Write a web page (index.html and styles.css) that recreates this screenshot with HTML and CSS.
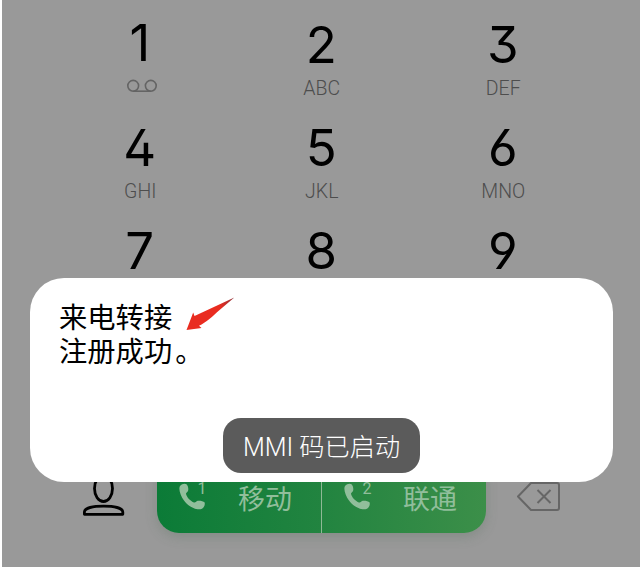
FILE: index.html
```html
<!DOCTYPE html>
<html lang="zh-CN">
<head>
<meta charset="utf-8">
<title>拨号</title>
<link rel="stylesheet" href="styles.css">
</head>
<body>
<main class="screen">
  <section class="keypad">
    <div class="key"><span class="digit digit-one">1</span>
      <svg class="voicemail" width="32" height="14" viewBox="0 0 32 14"><circle cx="7.2" cy="6.8" r="5.4"/><circle cx="24.8" cy="6.8" r="5.4"/><path d="M7.2 12.2H24.8"/></svg>
    </div>
    <div class="key"><span class="digit">2</span><span class="letters">ABC</span></div>
    <div class="key"><span class="digit">3</span><span class="letters">DEF</span></div>
    <div class="key"><span class="digit">4</span><span class="letters">GHI</span></div>
    <div class="key"><span class="digit">5</span><span class="letters">JKL</span></div>
    <div class="key"><span class="digit">6</span><span class="letters">MNO</span></div>
    <div class="key"><span class="digit">7</span></div>
    <div class="key"><span class="digit">8</span></div>
    <div class="key"><span class="digit">9</span></div>
  </section>
  <footer class="actions">
    <svg class="contact" width="44" height="48" viewBox="0 0 44 48"><ellipse cx="21.5" cy="19.5" rx="9" ry="13"/><path d="M2.4 45.3V43C2.4 39 11 37.2 21.6 37.2S40.8 39 40.8 43V45.3Z"/></svg>
    <div class="call-bar">
      <button class="call call-first">
        <svg class="phone" width="26" height="27" viewBox="0 0 26 27"><path d="M1 3C3 .5 6 .3 7.5 1.2C9 2.5 9.8 6 9 8C8.5 9.3 7 9.5 7 10.8C7.5 14 11.5 18.5 15 19.5C16.5 20 17.3 18 19 17.8C21 17.5 24.5 18.3 25.5 19.3C26.3 21 25.5 24.5 23 25.8C18 28 9 23.5 5 17.5C1.5 12.8-.8 6 1 3Z"/></svg>
        <sup class="sim">1</sup><span class="carrier">移动</span>
      </button>
      <button class="call">
        <svg class="phone" width="26" height="27" viewBox="0 0 26 27"><path d="M1 3C3 .5 6 .3 7.5 1.2C9 2.5 9.8 6 9 8C8.5 9.3 7 9.5 7 10.8C7.5 14 11.5 18.5 15 19.5C16.5 20 17.3 18 19 17.8C21 17.5 24.5 18.3 25.5 19.3C26.3 21 25.5 24.5 23 25.8C18 28 9 23.5 5 17.5C1.5 12.8-.8 6 1 3Z"/></svg>
        <sup class="sim">2</sup><span class="carrier">联通</span>
      </button>
    </div>
    <svg class="erase" width="46" height="32" viewBox="0 0 46 32"><path d="M15 2H41Q43 2 43 4V27Q43 29 41 29H15L2 15.5Z"/><path d="M21.5 9L34.5 22M34.5 9L21.5 22"/></svg>
  </footer>
  <section class="dialog">
    <p class="message">来电转接<br>注册成功<span class="stop">。</span></p>
    <svg class="arrow" width="50" height="36" viewBox="0 0 50 36">
      <defs><linearGradient id="tail"><stop offset=".7" stop-color="#e92c20"/><stop offset="1" stop-color="#8c3038"/></linearGradient></defs>
      <path fill="url(#tail)" d="M48.3 1.5L8.5 20L7.2 16.5L.5 34L15.5 32L13 29.8C20 26.5 27 20 33 14.5Z"/>
    </svg>
  </section>
  <div class="toast">MMI 码已启动</div>
</main>
</body>
</html>
```
FILE: styles.css
```css
* { box-sizing: border-box; }
body {
  margin: 0;
  background: #fff;
  font-family: Roboto, "Noto Sans CJK SC", sans-serif;
}
.screen {
  position: relative;
  height: 567px;
  margin-left: 2px;
  padding-top: 14px;
  background: #999;
  overflow: hidden;
}
.keypad {
  display: grid;
  grid-template-columns: repeat(3, 181.5px);
  grid-auto-rows: 103px;
  margin-left: 47px;
}
.key {
  display: flex;
  flex-direction: column;
  align-items: center;
}
.digit {
  font: 400 51px/62px Inter, sans-serif;
  font-feature-settings: "ss01";
  color: #000;
}
.digit-one { position: relative; top: -2px; }
.letters {
  margin: 2px 0 0 1px;
  font-size: 19.5px;
  line-height: 22px;
  font-weight: 300;
  color: #4d4d4d;
}
.voicemail {
  margin: 3px 0 0 5px;
  fill: none;
  stroke: #646464;
  stroke-width: 1.6;
}
.actions {
  display: flex;
  align-items: flex-start;
  height: 244px;
  padding: 147px 0 0 80px;
}
.contact {
  margin-top: -1px;
  fill: none;
  stroke: #000;
  stroke-width: 2.8;
  stroke-linejoin: round;
}
.actions svg { flex: none; }
.call-bar {
  display: flex;
  width: 329px;
  height: 63px;
  margin-left: 31px;
  border-radius: 0 0 22px 22px;
  background: linear-gradient(90deg, #0b7b37, #228440 50%, #3c8f49);
  box-shadow: 0 4px 12px rgba(70, 105, 80, .25);
  overflow: hidden;
}
.call {
  display: flex;
  align-items: flex-start;
  flex: 1;
  padding: 13px 0 0 22px;
  border: 0;
  background: none;
  color: #91be9b;
}
.call-first { border-right: 1.5px solid #8fb996; }
.phone { fill: #91be9b; }
.sim {
  width: 10px;
  margin: -3px 0 0 -8px;
  font: 400 16px/18px Roboto, sans-serif;
}
.carrier {
  margin: -2px 0 0 31px;
  font: 400 27px/34px "Noto Sans CJK SC", sans-serif;
}
.erase {
  margin: 11px 0 0 30px;
  fill: none;
  stroke: #666;
  stroke-width: 2;
  stroke-linejoin: round;
}
.dialog {
  position: absolute;
  left: 28px;
  top: 278px;
  width: 583px;
  height: 204px;
  padding: 21px 29px;
  border-radius: 34px;
  background: #fff;
}
.message {
  margin: 0;
  font: 400 28.3px/34px "Noto Sans CJK SC", sans-serif;
  color: #000;
}
.stop { margin-left: 3px; }
.arrow {
  position: absolute;
  left: 156px;
  top: 18px;
}
.toast {
  position: absolute;
  left: 221px;
  top: 418px;
  width: 197px;
  height: 55px;
  border-radius: 18px;
  background: #5b5b5b;
  color: #fff;
  font-size: 25.2px;
  font-weight: 300;
  line-height: 59px;
  text-align: center;
  white-space: nowrap;
}
```
